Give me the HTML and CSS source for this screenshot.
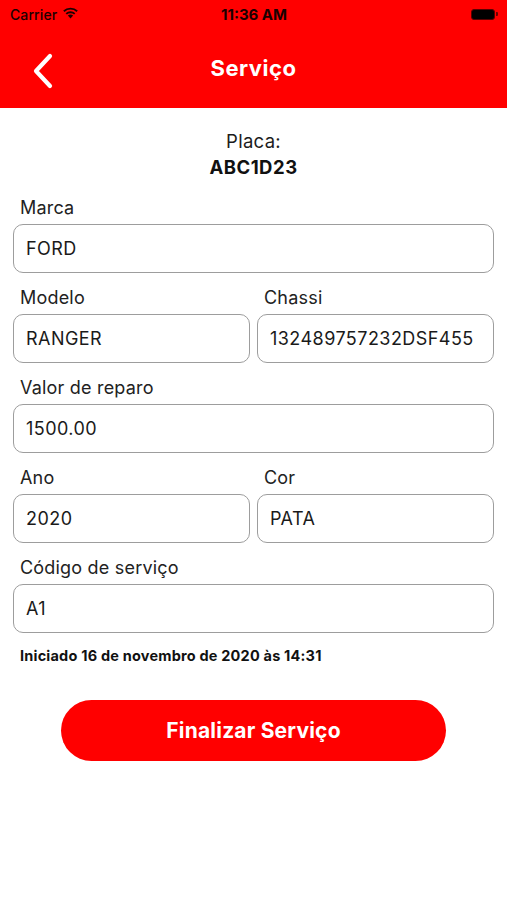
FILE: index.html
```html
<!DOCTYPE html>
<html lang="pt">
<head>
<meta charset="utf-8">
<title>Serviço</title>
<link rel="stylesheet" href="styles.css">
</head>
<body>
<div class="screen">
  <header class="header">
    <div class="status">
      <div class="status-left">
        <span class="carrier">Carrier</span>
        <svg class="wifi" width="17" height="12" viewBox="0 0 17 12">
          <path d="M8.5 11.5 L5.9 8.6 A3.8 3.8 0 0 1 11.1 8.6 Z" fill="#1a0000"/>
          <path d="M3.6 6.2 A7 7 0 0 1 13.4 6.2 L12.1 7.6 A5.2 5.2 0 0 0 4.9 7.6 Z" fill="#1a0000"/>
          <path d="M1.2 3.6 A10.5 10.5 0 0 1 15.8 3.6 L14.5 5 A8.6 8.6 0 0 0 2.5 5 Z" fill="#1a0000"/>
        </svg>
      </div>
      <span class="time">11:36 AM</span>
      <div class="battery"><div class="battery-body"></div><div class="battery-nub"></div></div>
    </div>
    <div class="nav">
      <svg class="back" width="24" height="36" viewBox="0 0 24 36">
        <path d="M19 3 L5 18 L19 33" fill="none" stroke="#fff" stroke-width="4.2" stroke-linecap="round" stroke-linejoin="round"/>
      </svg>
      <h1 class="title">Serviço</h1>
    </div>
  </header>

  <main class="content">
    <div class="plate">
      <div class="plate-label">Placa:</div>
      <div class="plate-value">ABC1D23</div>
    </div>

    <div class="field">
      <div class="label">Marca</div>
      <div class="box">FORD</div>
    </div>

    <div class="row">
      <div class="field">
        <div class="label">Modelo</div>
        <div class="box">RANGER</div>
      </div>
      <div class="field">
        <div class="label">Chassi</div>
        <div class="box">132489757232DSF455</div>
      </div>
    </div>

    <div class="field">
      <div class="label">Valor de reparo</div>
      <div class="box">1500.00</div>
    </div>

    <div class="row">
      <div class="field">
        <div class="label">Ano</div>
        <div class="box">2020</div>
      </div>
      <div class="field">
        <div class="label">Cor</div>
        <div class="box">PATA</div>
      </div>
    </div>

    <div class="field">
      <div class="label">Código de serviço</div>
      <div class="box">A1</div>
    </div>

    <p class="started">Iniciado 16 de novembro de 2020 às 14:31</p>

    <button class="finish">Finalizar Serviço</button>
  </main>
</div>
</body>
</html>
```

FILE: styles.css
```css
* { box-sizing: border-box; }
html, body { margin: 0; padding: 0; background: #fff; }
body {
  font-family: Inter, "Liberation Sans", Arial, sans-serif;
  color: #1c1c1c;
  width: 507px;
  height: 900px;
  overflow: hidden;
}
.header {
  background: #ff0000;
  height: 108px;
  display: flex;
  flex-direction: column;
}
.status {
  height: 28px;
  display: flex;
  align-items: center;
  justify-content: space-between;
  padding: 0 9px 0 10px;
  position: relative;
  color: #1a0000;
}
.status-left { display: flex; align-items: center; gap: 5px; width: 90px; }
.carrier { font-size: 14px; font-weight: 500; letter-spacing: 0.1px; }
.wifi { margin-top: -2px; }
.time {
  font-size: 15px;
  font-weight: 700;
}
.battery { width: 90px; display: flex; justify-content: flex-end; align-items: center; }
.battery-body {
  width: 24px;
  height: 11px;
  background: #000;
  border-radius: 3px;
  border: 1px solid #5a0000;
}
.battery-nub {
  width: 2px;
  height: 4px;
  background: #6a0000;
  border-radius: 0 1px 1px 0;
  margin-left: 1px;
}
.nav {
  flex: 1;
  display: flex;
  align-items: center;
  justify-content: center;
  position: relative;
}
.back {
  position: absolute;
  left: 31px;
  top: 25px;
}
.title {
  margin: 0;
  color: #fff;
  font-size: 22px;
  font-weight: 700;
  letter-spacing: 0.5px;
}
.content {
  padding: 20px 13px 0;
  display: flex;
  flex-direction: column;
}
.plate {
  text-align: center;
  margin-bottom: 18px;
}
.plate-label { font-size: 18.5px; line-height: 26px; color: #1c1c1c; letter-spacing: 0.3px; }
.plate-value { font-size: 18.5px; line-height: 26px; font-weight: 700; color: #111; letter-spacing: 0.5px; }
.field {
  display: flex;
  flex-direction: column;
  margin-bottom: 15px;
  min-width: 0;
}
.row {
  display: grid;
  grid-template-columns: 1fr 1fr;
  gap: 7px;
}
.label {
  font-size: 18px;
  line-height: 20px;
  padding-left: 7px;
  margin-bottom: 6px;
  color: #222;
  letter-spacing: 0.2px;
}
.box {
  height: 49px;
  border: 1px solid #9d9d9d;
  border-radius: 10px;
  padding: 0 12px;
  display: flex;
  align-items: center;
  font-size: 18px;
  color: #1a1a1a;
  white-space: nowrap;
  overflow: hidden;
  letter-spacing: 0.45px;
}
.started {
  margin: -1px 0 0 7px;
  font-size: 14.5px;
  line-height: 18px;
  font-weight: 700;
  color: #111;
  letter-spacing: 0.2px;
}
.finish {
  align-self: center;
  margin-top: 35px;
  width: 385px;
  height: 61px;
  border: none;
  border-radius: 31px;
  background: #ff0000;
  color: #fff;
  font-family: inherit;
  font-size: 21px;
  font-weight: 700;
  letter-spacing: 0.2px;
}
```
